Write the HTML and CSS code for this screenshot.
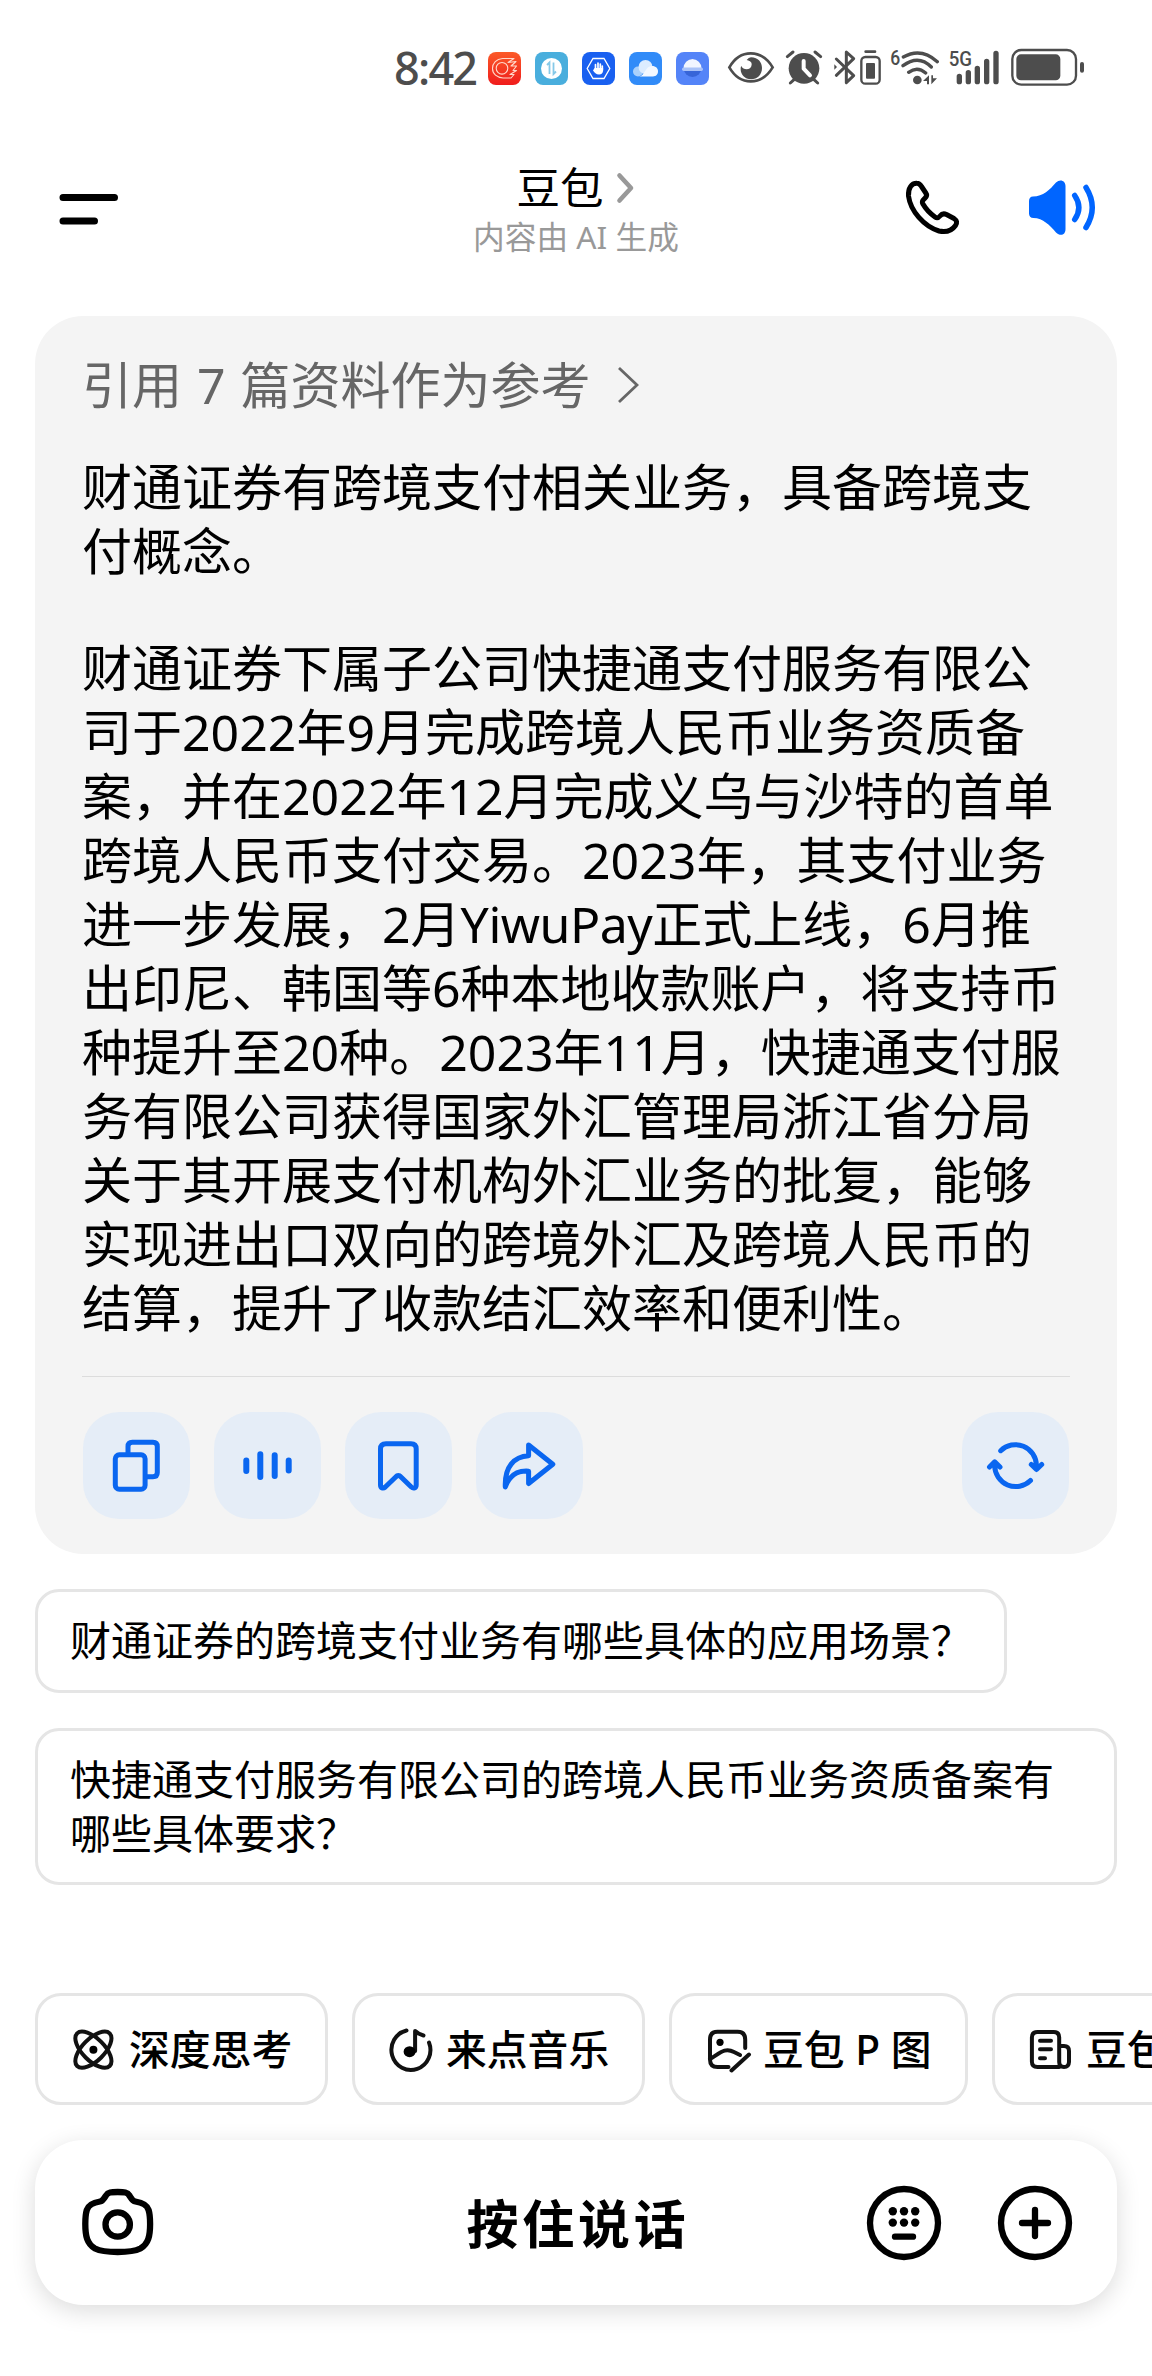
FILE: index.html
```html
<!DOCTYPE html>
<html lang="zh-CN">
<head>
    <meta charset="UTF-8">
    <meta name="viewport" content="width=device-width, initial-scale=1.0">
    <title>豆包</title>
    <link rel="stylesheet" href="styles.css">
</head>

<body>
    <div class="status-bar">
        <span class="time">8:42</span>
        <div class="app-icons">
            <svg viewBox="0 0 33 33">
                <defs><linearGradient id="red" x1="0" y1="0" x2="0" y2="1"><stop offset="0" stop-color="#fb5a28"/><stop offset="1" stop-color="#f01c1c"/></linearGradient></defs>
                <rect width="33" height="33" rx="8" fill="url(#red)"/>
                <g fill="none" stroke="#ffd9cc" stroke-width="1.1" stroke-linejoin="round"><path d="M26 6.5H14.5C8.500 7 4.500 11 4.500 16.500S9 25.500 15 26H23L26 22.500H22L28.500 18.500H25L28.500 14H23L28 9.500L20 10.500Z"/><circle cx="14" cy="16.300" r="5.800"/></g>
            </svg>
            <svg viewBox="0 0 33 33">
                <rect width="33" height="33" rx="8" fill="#49aedd"/>
                <circle cx="16.500" cy="16.500" r="10.500" fill="#fff"/>
                <path d="M12 13L14.500 10.500V22M18.500 10.500V22L21 19.500" fill="none" stroke="#86c9e8" stroke-width="1.800"/>
            </svg>
            <svg viewBox="0 0 33 33">
                <rect width="33" height="33" rx="8" fill="#1960f0"/>
                <path d="M11 6.500H22L27.800 16.500L22 26.500H11L5.200 16.500Z" fill="none" stroke="#fff" stroke-width="1.300"/>
                <path d="M13.500 19V12.500M16 17V11M18.300 17V12M20.300 18V14" stroke="#fff" stroke-width="1.700" stroke-linecap="round"/>
                <path d="M12.600 16H21.100V18.500C21 21 19.500 22.500 17 22.500C14 22.500 12.500 20.500 11 18.500Z" fill="#fff"/>
            </svg>
            <svg viewBox="0 0 33 33">
                <rect width="33" height="33" rx="8" fill="#318bf8"/>
                <circle cx="9" cy="19.500" r="5" fill="#a9d0fb"/>
                <circle cx="16.500" cy="15" r="7" fill="#dcecff"/>
                <path d="M10 24.500C16 24 16 14 23 14C27 14 29 16.500 29 19.300C29 22.500 27 24.500 24 24.500Z" fill="#f3f8ff"/>
            </svg>
            <svg viewBox="0 0 33 33">
                <rect width="33" height="33" rx="8" fill="#5484f8"/>
                <circle cx="16.500" cy="16" r="9" fill="#3765d8"/>
                <path d="M7.500 16a9 9 0 0 1 18 0Z" fill="#f1f5ff"/>
                <rect x="6" y="15.500" width="21" height="3.500" rx="1.700" fill="#a9c2f8"/>
            </svg>
        </div>
        <svg class="eye" viewBox="15 48 156 120">
            <path d="M28 112C60 56 124 56 158 112C124 168 60 168 28 112Z" fill="none" stroke="#4d4d4d" stroke-width="8"/>
            <path d="M93 82C115 82 126 98 126 114C126 134 112 148 93 148C75 148 62 134 62 118C62 114 62 111 64 108C70 122 94 121 95 104C96 94 86 92 80 90Q86 82 93 82Z" fill="#4d4d4d"/>
        </svg>
        <svg class="alarm" viewBox="195 48 114 120">
            <circle cx="252" cy="115" r="46" fill="#4d4d4d"/>
            <path d="M202 80L219 66M302 80L285 66M211 159L222 149M293 159L282 149" stroke="#4d4d4d" stroke-width="9" stroke-linecap="round"/>
            <path d="M251 93V116L270 136" fill="none" stroke="#fff" stroke-width="12" stroke-linecap="round" stroke-linejoin="round"/>
        </svg>
        <svg class="bluetooth" viewBox="339 48 147 120">
            <path d="M349 87L401 137L379 158V66L401 86L349 136" fill="none" stroke="#4d4d4d" stroke-width="9" stroke-linejoin="round" stroke-linecap="round"/>
            <path d="M343 103L351 111L343 119Z" fill="#4d4d4d"/>
            <rect x="424" y="81" width="55" height="80" rx="12" fill="none" stroke="#4d4d4d" stroke-width="7"/>
            <path d="M437 65H465" stroke="#4d4d4d" stroke-width="8" stroke-linecap="round"/>
            <rect x="438" y="99" width="27" height="47" rx="3" fill="#4d4d4d"/>
        </svg>
        <svg class="wifi" viewBox="510 48 150 120">
            <text x="511" y="105" class="tiny" textLength="30" lengthAdjust="spacingAndGlyphs">6</text>
            <path d="M550 81Q603 51 652 95M549 107Q596 72 634 111M566 127Q592 107 617 129" fill="none" stroke="#4d4d4d" stroke-width="10" stroke-linecap="round"/>
            <circle cx="592" cy="150" r="13" fill="#4d4d4d"/>
            <path d="M627 136V163H621V153H609ZM634 163V136H639V145H651Z" fill="#4d4d4d"/>
        </svg>
        <svg class="signal" viewBox="684 48 156 120">
            <text x="686" y="108" class="tiny" textLength="70" lengthAdjust="spacingAndGlyphs">5G</text>
            <path d="M718 139V155M745 128V155M772 115V155M800 94V155M828 70V155" stroke="#4d4d4d" stroke-width="16" stroke-linecap="round"/>
        </svg>
        <svg class="battery" viewBox="870 48 225 120">
            <rect x="877" y="60" width="191" height="104" rx="27" fill="none" stroke="#4d4d4d" stroke-width="7"/>
            <rect x="889" y="73" width="132" height="78" rx="14" fill="#4d4d4d"/>
            <rect x="1080" y="96" width="12" height="32" rx="6" fill="#4d4d4d"/>
        </svg>
    </div>

    <div class="header">
        <svg class="menu" viewBox="0 0 74 76">
            <path d="M11 27.500H62.500M11 51H42.500" stroke="#000" stroke-width="7" stroke-linecap="round"/>
        </svg>
        <div class="title-box">
            <h1>豆包
                <svg class="title-arrow" viewBox="0 0 20 34"><path d="M3.500 4.500L15 17L3.500 29.500" fill="none" stroke="#999" stroke-width="4.600" stroke-linecap="round" stroke-linejoin="round"/></svg>
            </h1>
            <p>内容由 AI 生成</p>
        </div>
        <div class="header-actions">
            <svg class="phone" viewBox="0 0 64 66">
                <path d="M17 8.200C19.500 8.200 20.500 10 21.500 11.500L25.800 18C27.500 20.500 26.500 21.800 25 23.200C22.500 25.500 21.500 26.800 22.800 28.800C25.500 33.500 30 38.500 35 42C37 43.500 38.300 43 40 41C42 38.500 44 38.300 46.500 39.500L54 43.500C57 45.500 57.300 48 55.500 50.500C52 55.500 46 57.500 39 56C24 51.500 10.500 36 8.500 21C8 13 11.500 8 17 8.200Z" fill="none" stroke="#000" stroke-width="5" stroke-linejoin="round"/>
            </svg>
            <svg class="speaker" viewBox="0 0 76 76">
                <path d="M9 26.500C19 26.500 26 19.500 32 12.500C36 8.500 41.500 10.500 41.500 16V59C41.500 65.500 36 66.500 32 62.500C26 55.500 19 48 9.500 48C6.500 48 5 46 5 43.500V31C5 28.500 6.500 26.500 9 26.500Z" fill="#0065ff"/>
                <path d="M50.700 25.500Q59 37.500 50.700 49.500M62 17.500Q74.500 37.500 62 57.500" fill="none" stroke="#0065ff" stroke-width="5.500" stroke-linecap="round"/>
            </svg>
        </div>
    </div>

    <div class="answer">
        <div class="sources">引用 7 篇资料作为参考
            <svg viewBox="0 0 22 38"><path d="M2 2L20 19L2 36" fill="none" stroke="#666" stroke-width="2.800"/></svg>
        </div>
        <p>财通证券有跨境支付相关业务，具备跨境支<br>付概念。</p>
        <p>财通证券下属子公司快捷通支付服务有限公<br>
            司于2022年9月完成跨境人民币业务资质备<br>
            案，并在2022年12月完成义乌与沙特的首单<br>
            跨境人民币支付交易。2023年，其支付业务<br>
            进一步发展，2月<span class="latin">YiwuPay</span>正式上线，6月推<br>
            出印尼、韩国等6种本地收款账户，将支持币<br>
            种提升至20种。2023年11月，快捷通支付服<br>
            务有限公司获得国家外汇管理局浙江省分局<br>
            关于其开展支付机构外汇业务的批复，能够<br>
            实现进出口双向的跨境外汇及跨境人民币的<br>
            结算，提升了收款结汇效率和便利性。</p>
        <div class="toolbar">
            <button><svg viewBox="0 0 107 107"><rect x="32.300" y="42.800" width="29.800" height="34.400" rx="4"/><path d="M45 42V34.500q0-4.300 4.300-4.300h20.700q4.300 0 4.300 4.300v26q0 4.300-4.300 4.300h-7"/></svg></button>
            <button><svg viewBox="0 0 107 107" class="wave"><path d="M32.300 48.500V59M46.300 42.300V65M60.700 43.300V64M74.700 48.500V58.500"/></svg></button>
            <button><svg viewBox="0 0 107 107"><path d="M41 31.800H66Q71.200 31.800 71.200 37V73C71.200 76 68.500 77 66.300 75L56 65Q53.300 62 50.700 65L40.300 75C38 77 35.500 76 35.500 73V37Q35.500 31.800 41 31.800Z"/></svg></button>
            <button><svg viewBox="0 0 107 107"><path d="M52.600 33L76.800 52.300L52.600 71.500V59.200C43 58.500 34 62 29.300 75C28.500 55 38 44.500 52.600 43.800Z"/></svg></button>
            <button class="refresh"><svg viewBox="0 0 107 107"><path d="M38.700 38.700A21 21 0 0 1 74.400 53.500V56.500M69.300 52.500L74.500 57.500L79.700 52.500M68.500 68.500A21 21 0 0 1 32.700 53.500V51M27.500 55L32.700 49.800L38 55"/></svg></button>
        </div>
    </div>

    <div class="suggestions">
        <div class="suggestion">财通证券的跨境支付业务有哪些具体的应用场景？</div>
        <div class="suggestion">快捷通支付服务有限公司的跨境人民币业务资质备案有<br>哪些具体要求？</div>
    </div>

    <div class="chips">
        <div class="chip">
            <svg viewBox="0 0 48 48"><g transform="translate(23.400 24.700)"><ellipse rx="23" ry="11" transform="rotate(45)"/><ellipse rx="23" ry="11" transform="rotate(-45)"/><circle r="4" class="solid"/></g></svg>
            <span>深度思考</span>
        </div>
        <div class="chip">
            <svg viewBox="0 0 48 48"><path d="M19.500 5.500A19.500 20 0 1 0 42 17.500M28.100 26V6Q31 9 36.500 10.500"/><ellipse cx="22.600" cy="26.700" rx="6" ry="5.500" class="solid"/></svg>
            <span>来点音乐</span>
        </div>
        <div class="chip">
            <svg viewBox="0 0 48 48"><path d="M41.200 23V14.500q0-7.700-7.700-7.700H13.500q-7.500 0-7.500 7.700v20q0 7.500 7.500 7.500h11M6 34C16 28 21 22 30 27L36 30M45 29.500L27.500 45.500"/><circle cx="16" cy="17.300" r="3.600" class="solid"/></svg>
            <span>豆包 P 图</span>
        </div>
        <div class="chip">
            <svg viewBox="0 0 48 48"><path d="M32.200 42H10.500Q4.900 42 4.900 36.500V12.500Q4.900 7 10.500 7H26.700Q32.200 7 32.200 12.500V37Q32.200 42 37 42T42 37V26Q42 21 37 21H32.200M13 15.700H24M13 24.300H24M13 33.300H18"/></svg>
            <span>豆包</span>
        </div>
    </div>

    <div class="composer">
        <svg viewBox="0 0 80 80">
            <path d="M39.700 69C30 69 22 68 17 65.500C9 61 7.300 53 7.300 41C7.300 35 7.600 31 8.800 27C10.500 21.500 15 19.600 22 18.500C25 18 26.500 15 28 12.500C30 9.300 33 9 39.700 9C46.400 9 49.400 9.300 51.400 12.500C53 15 54.400 18 57.400 18.500C64.400 19.600 69 21.500 70.600 27C71.800 31 72.100 35 72.100 41C72.100 53 70.400 61 62.400 65.500C57.400 68 49.400 69 39.700 69Z"/>
            <circle cx="39.700" cy="41.500" r="12.200"/>
        </svg>
        <span class="hold">按住说话</span>
        <div class="composer-actions">
            <svg viewBox="0 0 80 80">
                <circle cx="40" cy="40" r="34"/>
                <g class="solid"><circle cx="28.800" cy="28.300" r="4.200"/><circle cx="40" cy="28.300" r="4.200"/><circle cx="51.200" cy="28.300" r="4.200"/><circle cx="28.800" cy="39.600" r="4.200"/><circle cx="40" cy="39.600" r="4.200"/><circle cx="51.200" cy="39.600" r="4.200"/></g>
                <path d="M31 53.700H49"/>
            </svg>
            <svg viewBox="0 0 80 80"><circle cx="40" cy="40" r="34"/><path d="M27 40H53M40 27V53"/></svg>
        </div>
    </div>
</body>
</html>
```

FILE: styles.css
```css
* {
    box-sizing: border-box;
}

body {
    margin: 0;
    height: 2376px;
    background-color: #fff;
    color: #000;
    font-family: "Noto Sans", "Noto Sans CJK SC", sans-serif;
    overflow: hidden;
}

svg {
    display: block;
    flex: none;
}

h1, p {
    margin: 0;
    font-weight: 400;
}

/* status bar */
.status-bar {
    display: flex;
    align-items: center;
    height: 86px;
    padding: 46px 0 0 394px;
    color: #4d4d4d;
}

.status-bar svg {
    height: 40px;
}

.time {
    width: 94px;
    margin-top: 3px;
    font-size: 45px;
    line-height: 40px;
    font-weight: 500;
    letter-spacing: -1.8px;
}

.app-icons {
    display: flex;
    gap: 14px;
    margin: 5px 16px 0 0;
}

.app-icons svg {
    width: 33px;
    height: 33px;
}

.eye {
    width: 52px;
    margin-right: 8px;
}

.alarm {
    width: 38px;
    margin-right: 10px;
}

.bluetooth {
    width: 49px;
    margin-right: 8px;
}

.wifi {
    width: 50px;
    margin-right: 8px;
}

.signal {
    width: 52px;
    margin-right: 10px;
}

.battery {
    width: 75px;
}

.tiny {
    font-family: Roboto, sans-serif;
    font-size: 62px;
    font-weight: 500;
    fill: #4d4d4d;
}

/* header */
.header {
    display: grid;
    grid-template-columns: 1fr auto 1fr;
    align-items: center;
    height: 120px;
    margin-top: 62px;
    padding: 0 52px;
}

.menu {
    width: 74px;
    height: 76px;
}

.title-box {
    margin-top: 5px;
    text-align: center;
}

.title-box h1 {
    display: flex;
    align-items: center;
    justify-content: center;
    gap: 12px;
    font-size: 43.5px;
    line-height: 52px;
}

.title-arrow {
    width: 20px;
    height: 34px;
    margin-top: 2px;
}

.title-box p {
    color: #999;
    font-size: 31.7px;
    line-height: 48px;
}

.header-actions {
    display: flex;
    align-items: center;
    justify-content: flex-end;
    gap: 60px;
}

.phone {
    width: 64px;
    height: 66px;
}

.speaker {
    width: 76px;
    height: 76px;
}

/* answer card */
.answer {
    margin: 48px 35px 0;
    padding: 37px 47px 35px;
    height: 1238px;
    border-radius: 48px;
    background-color: #f4f4f4;
    font-size: 50px;
    line-height: 64px;
    white-space: nowrap;
}

.sources {
    display: flex;
    align-items: center;
    gap: 26px;
    color: #666;
    word-spacing: 2px;
}

.sources svg {
    width: 22px;
    height: 38px;
}

.answer p {
    margin-top: 38px;
}

.answer p + p {
    margin-top: 53px;
}

.latin {
    letter-spacing: -0.5px;
}

.toolbar {
    display: flex;
    gap: 24px;
    margin-top: 36px;
    padding: 35px 1px 0;
    border-top: 1px solid #dcdcdc;
}

.toolbar button {
    width: 107px;
    height: 107px;
    padding: 0;
    border: none;
    border-radius: 36px;
    background-color: #e5edf7;
}

.toolbar svg {
    width: 107px;
    height: 107px;
    fill: none;
    stroke: #0a66f0;
    stroke-width: 5;
    stroke-linecap: round;
    stroke-linejoin: round;
}

.toolbar .wave {
    stroke-width: 6;
}

.toolbar .refresh {
    margin-left: auto;
}

/* follow-up questions */
.suggestions {
    display: flex;
    flex-direction: column;
    align-items: flex-start;
    gap: 35px;
    margin: 35px 35px 0;
}

.suggestion {
    min-width: 972px;
    height: 104px;
    padding: 21px 32px 0;
    border: 3px solid #e5e5e5;
    border-radius: 24px;
    font-size: 41px;
    line-height: 54px;
    white-space: nowrap;
}

.suggestion:last-child {
    width: 100%;
    height: 157px;
}

/* shortcut chips */
.chips {
    display: flex;
    gap: 24px;
    margin-top: 108px;
    padding-left: 35px;
    overflow: hidden;
}

.chip {
    display: flex;
    flex: none;
    align-items: center;
    gap: 11px;
    min-width: 293px;
    height: 112px;
    padding-left: 32px;
    border: 3px solid #e5e5e5;
    border-radius: 26px;
    font-size: 40.8px;
    font-weight: 500;
}

.chip:nth-child(3) {
    width: 299px;
}

.chip span {
    margin-top: -4px;
    white-space: nowrap;
}

.chip svg {
    width: 48px;
    height: 48px;
    fill: none;
    stroke: #111;
    stroke-width: 4;
    stroke-linecap: round;
    stroke-linejoin: round;
}

.chip .solid,
.composer .solid {
    fill: #000;
    stroke: none;
}

/* input bar */
.composer {
    display: grid;
    grid-template-columns: 1fr auto 1fr;
    align-items: center;
    height: 165px;
    margin: 35px 35px 0;
    padding: 0 42px 0 43px;
    border-radius: 48px;
    background-color: #fff;
    box-shadow: 0 6px 24px rgba(0, 0, 0, 0.14);
}

.composer svg {
    width: 80px;
    height: 80px;
    fill: none;
    stroke: #000;
    stroke-width: 6.3;
    stroke-linecap: round;
}

.hold {
    margin: -3px -3px 0 0;
    font-size: 52px;
    font-weight: 600;
    letter-spacing: 3.7px;
}

.composer-actions {
    display: flex;
    justify-content: flex-end;
    gap: 51px;
}
```
